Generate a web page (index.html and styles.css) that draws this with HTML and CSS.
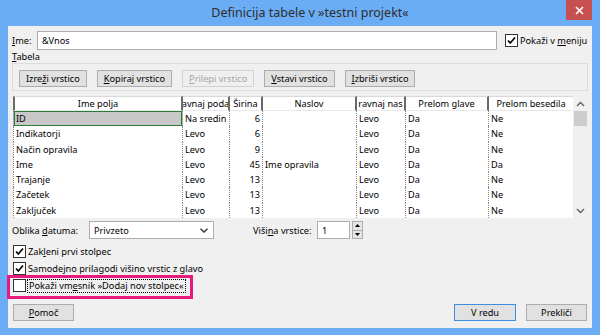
FILE: index.html
```html
<!DOCTYPE html>
<html lang="sl">
<head>
    <meta charset="UTF-8">
    <title>Definicija tabele</title>
    <link rel="stylesheet" href="styles.css">
</head>
<body>
    <div class="titlebar">
        <div class="title">Definicija tabele v »testni projekt«</div>
        <div class="close">
            <svg width="9" height="9" viewBox="0 0 9 9"><path d="M1 1L8 8M8 1L1 8" stroke="#fff" stroke-width="1.6" fill="none"/></svg>
        </div>
    </div>

    <div class="client">
        <div class="name-row">
            <div class="name-label"><u>I</u>me:</div>
            <div class="textbox name-input">&amp;Vnos</div>
            <div class="check menu-check">
                <span class="box"><svg width="11" height="11" viewBox="0 0 11 11"><path d="M2 5.5L4.3 8L9 2.5" stroke="#000" stroke-width="1.7" fill="none"/></svg></span>
                <span>Pokaži v <u>m</u>eniju</span>
            </div>
        </div>

        <div class="section-label"><u>T</u>abela</div>
        <div class="group">
            <button class="btn">Izre<u>ž</u>i vrstico</button>
            <button class="btn"><u>K</u>opiraj vrstico</button>
            <button class="btn disabled"><u>P</u>rilepi vrstico</button>
            <button class="btn"><u>V</u>stavi vrstico</button>
            <button class="btn"><u>I</u>zbriši vrstico</button>
        </div>

        <div class="grid-wrap">
            <div class="grid">
                <div class="hcell">Ime polja</div>
                <div class="hcell">avnaj poda</div>
                <div class="hcell">Širina</div>
                <div class="hcell">Naslov</div>
                <div class="hcell">ravnaj nas</div>
                <div class="hcell">Prelom glave</div>
                <div class="hcell last">Prelom besedila</div>

                <div class="cell first sel">ID</div>
                <div class="cell">Na sredin</div>
                <div class="cell num">6</div>
                <div class="cell"></div>
                <div class="cell">Levo</div>
                <div class="cell">Da</div>
                <div class="cell last">Ne</div>

                <div class="cell first">Indikatorji</div>
                <div class="cell">Levo</div>
                <div class="cell num">6</div>
                <div class="cell"></div>
                <div class="cell">Levo</div>
                <div class="cell">Da</div>
                <div class="cell last">Ne</div>

                <div class="cell first">Način opravila</div>
                <div class="cell">Levo</div>
                <div class="cell num">9</div>
                <div class="cell"></div>
                <div class="cell">Levo</div>
                <div class="cell">Da</div>
                <div class="cell last">Ne</div>

                <div class="cell first">Ime</div>
                <div class="cell">Levo</div>
                <div class="cell num">45</div>
                <div class="cell">Ime opravila</div>
                <div class="cell">Levo</div>
                <div class="cell">Da</div>
                <div class="cell last">Da</div>

                <div class="cell first">Trajanje</div>
                <div class="cell">Levo</div>
                <div class="cell num">13</div>
                <div class="cell"></div>
                <div class="cell">Levo</div>
                <div class="cell">Da</div>
                <div class="cell last">Ne</div>

                <div class="cell first">Začetek</div>
                <div class="cell">Levo</div>
                <div class="cell num">13</div>
                <div class="cell"></div>
                <div class="cell">Levo</div>
                <div class="cell">Da</div>
                <div class="cell last">Ne</div>

                <div class="cell first">Zaključek</div>
                <div class="cell">Levo</div>
                <div class="cell num">13</div>
                <div class="cell"></div>
                <div class="cell">Levo</div>
                <div class="cell">Da</div>
                <div class="cell last">Ne</div>
            </div>
            <div class="vscroll">
                <div class="arrow"><svg width="9" height="6" viewBox="0 0 9 6"><path d="M1 5L4.5 1.5L8 5" stroke="#606060" stroke-width="1.4" fill="none"/></svg></div>
                <div class="thumb"></div>
                <div class="track"></div>
                <div class="arrow"><svg width="9" height="6" viewBox="0 0 9 6"><path d="M1 1L4.5 4.5L8 1" stroke="#606060" stroke-width="1.4" fill="none"/></svg></div>
            </div>
        </div>

        <div class="format-row">
            <div class="date-label">Oblika <u>d</u>atuma:</div>
            <div class="select">
                <span>Privzeto</span>
                <svg width="8" height="5" viewBox="0 0 8 5"><path d="M0.5 0.8L4 4L7.5 0.8" stroke="#333" stroke-width="1.3" fill="none"/></svg>
            </div>
            <div class="height-label">Viši<u>n</u>a vrstice:</div>
            <div class="textbox spin-input">1</div>
            <div class="spin">
                <div class="spin-btn"><svg width="5" height="3" viewBox="0 0 5 3"><path d="M0 3L2.5 0L5 3Z" fill="#000"/></svg></div>
                <div class="spin-btn"><svg width="5" height="3" viewBox="0 0 5 3"><path d="M0 0L2.5 3L5 0Z" fill="#000"/></svg></div>
            </div>
        </div>

        <div class="checks">
            <div class="check check-row">
                <span class="box"><svg width="11" height="11" viewBox="0 0 11 11"><path d="M2 5.5L4.3 8L9 2.5" stroke="#000" stroke-width="1.7" fill="none"/></svg></span>
                <span>Zak<u>l</u>eni prvi stolpec</span>
            </div>
            <div class="check check-row">
                <span class="box"><svg width="11" height="11" viewBox="0 0 11 11"><path d="M2 5.5L4.3 8L9 2.5" stroke="#000" stroke-width="1.7" fill="none"/></svg></span>
                <span>Samodejno prilagodi višino vrstic z glavo</span>
            </div>
            <div class="check check-row">
                <span class="box"></span>
                <span class="focus">Pokaži vm<u>e</u>snik »Dodaj nov stolpec«</span>
            </div>
        </div>

        <div class="footer">
            <button class="btn fbtn"><u>P</u>omoč</button>
            <div class="right-buttons">
                <button class="btn fbtn default">V redu</button>
                <button class="btn fbtn">Prekliči</button>
            </div>
        </div>
    </div>

    <div class="highlight"></div>
</body>
</html>
```

FILE: styles.css
```css
body {
    margin: 0;
    width: 600px;
    height: 335px;
    overflow: hidden;
    position: relative;
    background-color: #6badf5;
    font-family: "Noto Sans", "DejaVu Sans", sans-serif;
    font-size: 9.2px;
    color: #000;
}
u {
    text-decoration: underline;
    text-underline-offset: 1px;
}
.titlebar {
    height: 26px;
    display: flex;
}
.title {
    flex: 1;
    padding-left: 54px;
    text-align: center;
    line-height: 25px;
    font-size: 12.5px;
    color: #2e2e2e;
}
.close {
    width: 26px;
    height: 20px;
    margin-right: 8px;
    background-color: #c75050;
    display: flex;
    align-items: center;
    justify-content: center;
}
.client {
    height: 302px;
    margin: 0 8px;
    padding: 5px 4px 0 4px;
    box-sizing: border-box;
    background-color: #f0f0f0;
}
.name-row {
    height: 19px;
    display: flex;
    align-items: center;
}
.name-label {
    width: 25px;
}
.textbox {
    height: 19px;
    box-sizing: border-box;
    padding: 0 4px;
    line-height: 17px;
    background-color: #fff;
    border: 1px solid #abadb3;
}
.name-input {
    width: 460px;
}
.check {
    display: flex;
    align-items: center;
    gap: 2px;
    white-space: nowrap;
}
.menu-check {
    margin-left: 8px;
}
.box {
    width: 13px;
    height: 13px;
    box-sizing: border-box;
    border: 1px solid #333;
    background-color: #fff;
    display: flex;
    align-items: center;
    justify-content: center;
    flex-shrink: 0;
}
.section-label {
    height: 13px;
    line-height: 13px;
}
.group {
    height: 28px;
    box-sizing: border-box;
    padding: 6px 0 0 6px;
    border: 1px solid #dcdcdc;
    display: flex;
    align-items: flex-start;
    gap: 10px;
}
.btn {
    height: 17px;
    padding: 0 6px;
    font: inherit;
    line-height: 15px;
    color: #000;
    background-color: #e1e1e1;
    border: 1px solid #adadad;
    white-space: nowrap;
}
.btn.disabled {
    color: #a6a6a6;
    background-color: #efefef;
    border-color: #d2d2d2;
}
.grid-wrap {
    width: 575px;
    height: 122px;
    margin: 5px 0 0 1px;
    display: flex;
    background-color: #fff;
}
.grid {
    display: grid;
    grid-template-columns: 170px 47px 33px 94px 49px 83px 84px;
    grid-template-rows: 15px repeat(7, 15.3px);
}
.hcell {
    display: flex;
    justify-content: center;
    align-items: center;
    overflow: hidden;
    white-space: nowrap;
    border-top: 1px solid #d9d9d9;
    border-bottom: 1px solid #e8e8e8;
    border-right: 2px solid #6a6a6a;
    box-sizing: border-box;
}
.hcell:first-child {
    border-left: 2px solid #6a6a6a;
}
.hcell.last {
    border-right: none;
}
.cell {
    padding: 0 2px;
    line-height: 15px;
    overflow: hidden;
    white-space: nowrap;
    border-right: 1px dotted #8a8a8a;
}
.cell.first {
    border-left: 1px dotted #8a8a8a;
}
.cell.last {
    border-right: none;
}
.cell.num {
    text-align: right;
}
.cell.sel {
    background-color: #c8c8c8;
    box-shadow: inset 0 0 0 1px #2b7a3b;
}
.vscroll {
    width: 15px;
    background-color: #f0f0f0;
    display: flex;
    flex-direction: column;
}
.arrow {
    height: 15px;
    display: flex;
    align-items: center;
    justify-content: center;
}
.thumb {
    height: 15px;
    margin: 0 1px;
    background-color: #cdcdcd;
}
.track {
    flex: 1;
}
.format-row {
    height: 18px;
    margin-top: 3px;
    display: flex;
    align-items: center;
}
.date-label {
    width: 77px;
}
.select {
    width: 125px;
    height: 18px;
    box-sizing: border-box;
    padding: 0 5px 0 4px;
    background-color: #fff;
    border: 1px solid #acacac;
    display: flex;
    align-items: center;
    justify-content: space-between;
}
.height-label {
    width: 64px;
    margin-left: 39px;
}
.spin-input {
    width: 33px;
    height: 18px;
}
.spin {
    width: 11px;
    height: 18px;
    margin-left: 2px;
    display: flex;
    flex-direction: column;
}
.spin-btn {
    flex: 1;
    background-color: #e5e5e5;
    border: 1px solid #adadad;
    display: flex;
    align-items: center;
    justify-content: center;
}
.spin-btn + .spin-btn {
    border-top: none;
}
.checks {
    margin-top: 4px;
}
.check-row {
    height: 17px;
    padding-left: 1px;
}
.focus {
    line-height: 12px;
    padding: 0 1px;
    outline: 1px dotted #000;
}
.footer {
    margin-top: 10px;
    padding: 0 1px;
    display: flex;
    justify-content: space-between;
}
.right-buttons {
    display: flex;
    gap: 10px;
}
.fbtn {
    width: 61px;
    padding: 0;
}
.fbtn.default {
    width: 62px;
    border-color: #3a8fe0;
}
.highlight {
    position: absolute;
    left: 7px;
    top: 275px;
    width: 186px;
    height: 24px;
    box-sizing: border-box;
    border: 3px solid #e6197f;
}
```
